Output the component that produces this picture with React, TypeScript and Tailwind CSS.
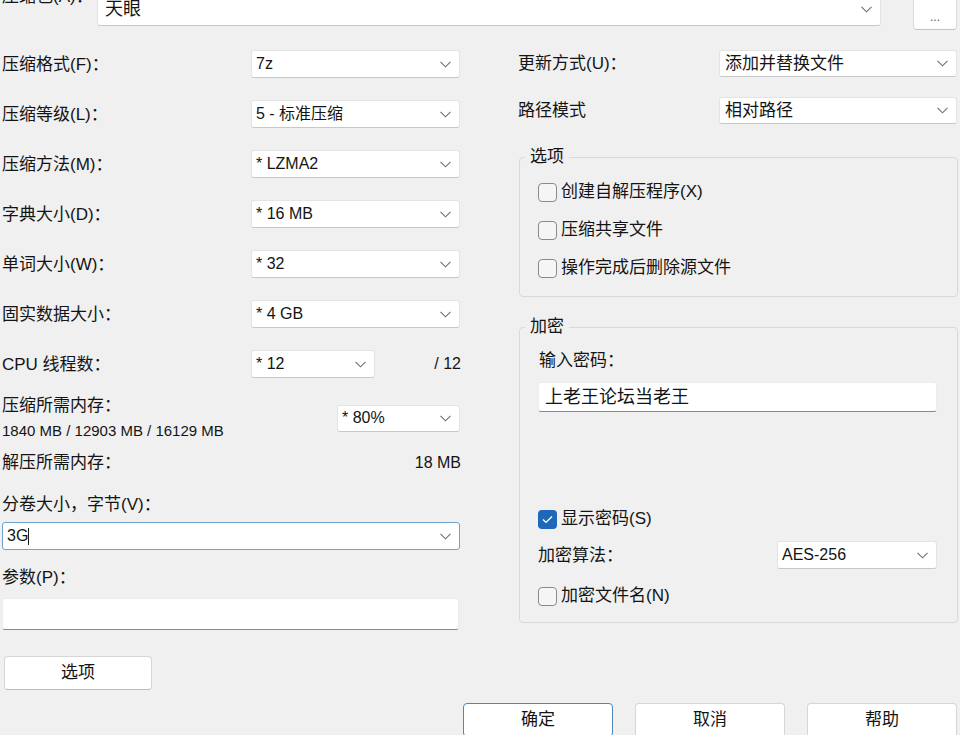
import React from 'react';

const FONT = 'font-["Liberation_Sans","Noto_Sans_CJK_SC",sans-serif]';

const Chevron: React.FC = () => (
  <svg width="11" height="7" viewBox="0 0 11 7" className="shrink-0">
    <polyline points="0.5,0.8 5.5,5.8 10.5,0.8" fill="none" stroke="#6f6f6f" strokeWidth="1.1" />
  </svg>
);

type ComboProps = { value: string; className?: string; pad?: string; size?: string };

const Combo: React.FC<ComboProps> = ({ value, className = '', pad = 'pl-[4px]', size = 'text-[16px]' }) => (
  <div
    className={`flex items-center justify-between bg-white border border-[#e4e4e4] border-b-[#c8c8c8] rounded-[3px] pr-[8px] ${pad} ${className}`}
  >
    <span className={`whitespace-pre ${size}`}>{value}</span>
    <Chevron />
  </div>
);

const Check: React.FC<{ label: string; checked?: boolean }> = ({ label, checked }) => (
  <div className="flex items-center h-[28px] ml-[18px] gap-[4px]">
    {checked ? (
      <span className="w-[19px] h-[19px] rounded-[4px] bg-[#1f67b8] flex items-center justify-center">
        <svg width="11" height="9" viewBox="0 0 11 9">
          <polyline points="1,4.6 4,7.4 10,1.4" fill="none" stroke="#fff" strokeWidth="1.4" />
        </svg>
      </span>
    ) : (
      <span className="w-[19px] h-[19px] rounded-[4px] border border-[#8b8b8b] bg-[#f5f5f5]" />
    )}
    <span>{label}</span>
  </div>
);

const Button: React.FC<{ label: string; primary?: boolean; className?: string }> = ({ label, primary, className = '' }) => (
  <div
    className={`h-[34px] bg-white rounded-[4px] flex items-center justify-center border ${
      primary ? 'border-[#4d87b8]' : 'border-[#d6d6d6] border-b-[#bdbdbd]'
    } ${className}`}
  >
    {label}
  </div>
);

const Row: React.FC<{ label: string; children: React.ReactNode; labelW?: string; h?: string }> = ({
  label,
  children,
  labelW = 'w-[249px]',
  h = 'h-[28px]',
}) => (
  <div className={`flex items-center ${h}`}>
    <span className={`${labelW} shrink-0 pt-[1px]`}>{label}</span>
    {children}
  </div>
);

export default function App() {
  return (
    <div className={`w-[960px] h-[735px] overflow-hidden bg-[#f0f0f0] text-[17px] text-[#141414] ${FONT}`}>
      {/* archive name */}
      <div className="flex items-start -mt-[10px] h-[40px]">
        <span className="w-[97px] pl-[2px] -mt-[5px] leading-[24px] shrink-0">压缩包(A)：</span>
        <Combo value="天眼" pad="pl-[7px]" size="text-[18px]" className="mt-[2px] h-[34px] w-[784px]" />
        <div className="ml-[32px] w-[44px] h-[40px] bg-white border border-[#dcdcdc] border-b-[#c4c4c4] rounded-[4px] flex items-end justify-center pb-[6px] text-[12px] leading-none text-[#555]">
          ...
        </div>
      </div>

      <div className="flex mt-[20px]">
        {/* left column */}
        <div className="w-[459px] ml-[2px] flex flex-col">
          <div className="flex flex-col gap-[22px]">
            <Row label="压缩格式(F)：">
              <Combo value="7z" className="w-[209px] h-full" />
            </Row>
            <Row label="压缩等级(L)：">
              <Combo value="5 - 标准压缩" className="w-[209px] h-full" />
            </Row>
            <Row label="压缩方法(M)：">
              <Combo value="* LZMA2" className="w-[209px] h-full" />
            </Row>
            <Row label="字典大小(D)：">
              <Combo value="* 16 MB" className="w-[209px] h-full" />
            </Row>
            <Row label="单词大小(W)：">
              <Combo value="* 32" className="w-[209px] h-full" />
            </Row>
            <Row label="固实数据大小：">
              <Combo value="* 4 GB" className="w-[209px] h-full" />
            </Row>
            <Row label="CPU 线程数：">
              <Combo value="* 12" className="w-[124px] h-full" />
              <span className="flex-1 text-right text-[16px]">/ 12</span>
            </Row>
          </div>

          <div className="flex items-center justify-between mt-[15px]">
            <div className="flex flex-col leading-[25px]">
              <span>压缩所需内存：</span>
              <span className="text-[15px]">1840 MB / 12903 MB / 16129 MB</span>
            </div>
            <Combo value="* 80%" className="w-[123px] h-[27px] mr-[1px]" />
          </div>

          <div className="flex items-center justify-between h-[24px] mt-[8px]">
            <span>解压所需内存：</span>
            <span className="text-[16px]">18 MB</span>
          </div>

          <div className="h-[24px] mt-[18px] flex items-center">分卷大小，字节(V)：</div>
          <div className="mt-[5px] h-[28px] w-[458px] bg-white border border-[#6ea3cf] rounded-[3px] flex items-center justify-between pl-[4px] pr-[8px]">
            <span className="flex items-center text-[16px]">
              3G<span className="w-px h-[17px] bg-[#1c1c1c]" />
            </span>
            <Chevron />
          </div>

          <div className="h-[24px] mt-[16px] flex items-center">参数(P)：</div>
          <div className="mt-[8px] h-[32px] w-[457px] bg-white border border-[#ececec] border-b-[#8a8a8a] rounded-[3px]" />

          <Button label="选项" className="mt-[26px] ml-[2px] w-[148px]" />
        </div>

        {/* right column */}
        <div className="ml-[57px] w-[440px] flex flex-col">
          <Row label="更新方式(U)：" labelW="w-[201px]" h="h-[27px]">
            <Combo value="添加并替换文件" pad="pl-[5px]" size="text-[17px]" className="w-[238px] h-full" />
          </Row>
          <div className="mt-[20px]">
            <Row label="路径模式" labelW="w-[201px]" h="h-[27px]">
              <Combo value="相对路径" pad="pl-[5px]" size="text-[17px]" className="w-[238px] h-full" />
            </Row>
          </div>

          <fieldset className="mt-[21px] ml-[1px] w-[439px] border border-[#d9d9d9] rounded-[4px] pb-[14px]">
            <legend className="ml-[5px] px-[5px] leading-[24px]">选项</legend>
            <div className="mt-[9px] flex flex-col gap-[10px]">
              <Check label="创建自解压程序(X)" />
              <Check label="压缩共享文件" />
              <Check label="操作完成后删除源文件" />
            </div>
          </fieldset>

          <fieldset className="mt-[18px] ml-[1px] w-[439px] border border-[#d9d9d9] rounded-[4px] pb-[12px]">
            <legend className="ml-[5px] px-[5px] leading-[24px]">加密</legend>
            <div className="ml-[19px] mt-[10px] h-[24px] flex items-center">输入密码：</div>
            <div className="ml-[18px] mt-[9px] w-[399px] h-[30px] bg-white border border-[#ededed] border-b-[#8a8a8a] rounded-[3px] flex items-center pl-[6px] text-[18px]">
              上老王论坛当老王
            </div>
            <div className="mt-[93px]">
              <Check label="显示密码(S)" checked />
            </div>
            <div className="mt-[8px] ml-[18px] h-[28px] flex items-center">
              <span className="w-[239px] shrink-0 pt-[1px]">加密算法：</span>
              <Combo value="AES-256" pad="pl-[4px]" className="w-[160px] h-full" />
            </div>
            <div className="mt-[13px]">
              <Check label="加密文件名(N)" />
            </div>
          </fieldset>
        </div>
      </div>

      {/* dialog buttons */}
      <div className="flex justify-end gap-[22px] pr-[3px] mt-[13px]">
        <Button label="确定" primary className="w-[150px]" />
        <Button label="取消" className="w-[150px]" />
        <Button label="帮助" className="w-[150px]" />
      </div>
    </div>
  );
}
